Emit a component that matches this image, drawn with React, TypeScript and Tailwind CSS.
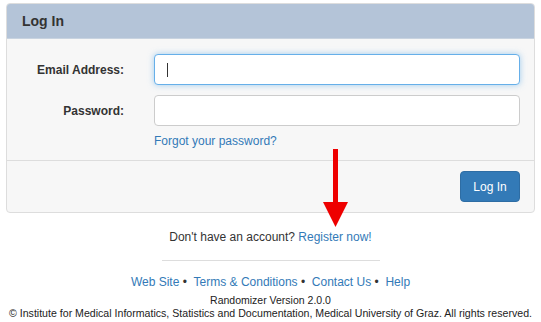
import React from 'react';

const links = ['Web Site', 'Terms & Conditions', 'Contact Us', 'Help'];

export default function App() {
  return (
    <div className="relative w-[541px] h-[322px] bg-white font-['Liberation_Sans',Arial,sans-serif] text-[#333] overflow-hidden">
      <div className="pt-[3px] pl-[6px] pr-[6px]">
        <div className="border border-[#dddddd] rounded-[4px] overflow-hidden bg-[#f7f7f7]">
          <div className="h-[35px] bg-[#b4c4d8] border-b border-[#c8d3e0] flex items-center px-[15px]">
            <span className="text-[14px] font-bold text-[#333]">Log In</span>
          </div>
          <div className="pt-[15px] pb-[10px] pr-[14px]">
            <div className="flex items-center">
              <label className="w-[117px] text-right text-[12px] font-bold">Email Address:</label>
              <div className="ml-[30px] flex-1 h-[31px] bg-white border border-[#66afe9] rounded-[4px] shadow-[0_0_6px_rgba(102,175,233,0.6)] flex items-center pl-[12px]">
                <div className="w-px h-[14px] bg-[#333]" />
              </div>
            </div>
            <div className="flex items-center mt-[10px]">
              <label className="w-[117px] text-right text-[12px] font-bold">Password:</label>
              <div className="ml-[30px] flex-1 h-[31px] bg-white border border-[#cccccc] rounded-[4px]" />
            </div>
            <div className="ml-[147px] mt-[7px] text-[12px] leading-[17px] text-[#337ab7]">Forgot your password?</div>
          </div>
          <div className="border-t border-[#dddddd] pt-[10px] pb-[10px] pr-[14px] flex justify-end">
            <button className="w-[60px] h-[31px] rounded-[4px] bg-[#337ab7] border border-[#2e6da4] text-white text-[12px]">Log In</button>
          </div>
        </div>
      </div>

      <div className="mt-[16px] text-center text-[12px] leading-[17px]">
        Don't have an account? <span className="text-[#337ab7]">Register now!</span>
      </div>
      <div className="mx-auto mt-[14px] w-[218px] border-t border-[#dddddd]" />
      <div className="mt-[13px] text-center text-[12px] leading-[17px]">
        {links.map((l, i) => (
          <span key={l}>
            <span className="text-[#337ab7]">{l}</span>
            {i < links.length - 1 && <span className="text-[#333]">{' \u2022 '}&nbsp;</span>}
          </span>
        ))}
      </div>
      <div className="mt-[2px] text-center text-[10.5px] leading-[14px] text-[#222]">Randomizer Version 2.0.0</div>
      <div className="text-center text-[10.6px] leading-[13px] text-[#222] whitespace-nowrap">
        © Institute for Medical Informatics, Statistics and Documentation, Medical University of Graz. All rights reserved.
      </div>

      {/* red annotation arrow */}
      <svg className="absolute left-[322px] top-[148px]" width="28" height="80" viewBox="0 0 28 80">
        <rect x="11" y="1" width="5" height="56" fill="#ee0000" />
        <polygon points="1,54 26,54 13.5,79" fill="#ee0000" />
      </svg>
    </div>
  );
}
